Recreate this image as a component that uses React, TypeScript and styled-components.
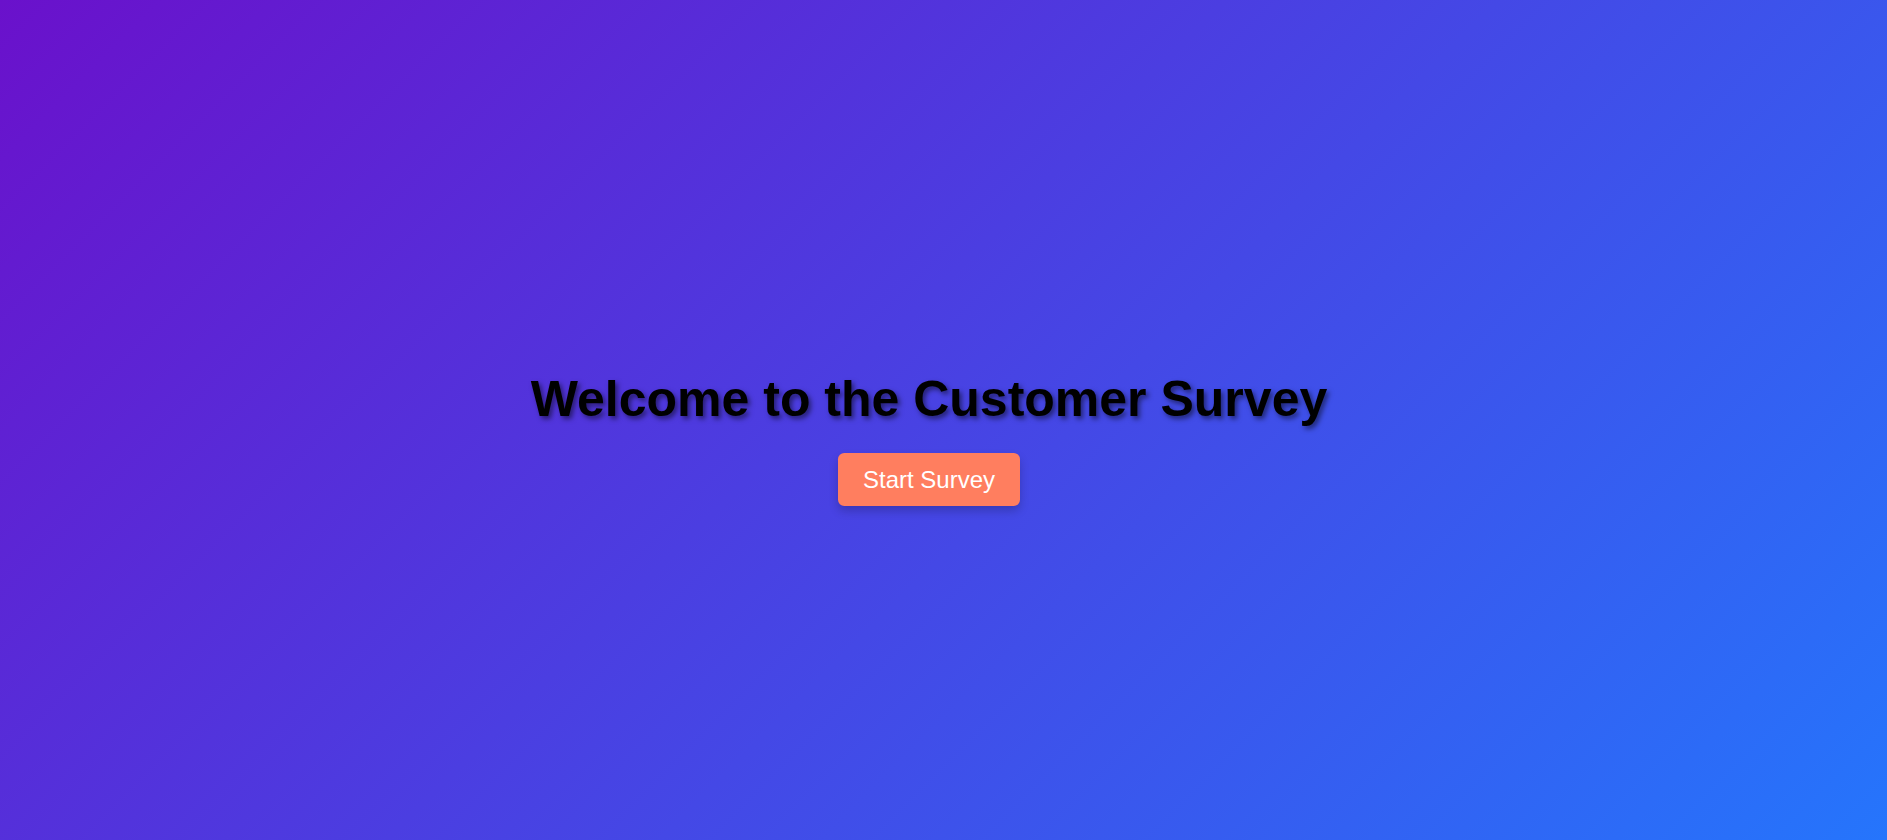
import React from 'react';
import styled, { createGlobalStyle } from 'styled-components';

const GlobalStyle = createGlobalStyle`
  body {
    margin: 0;
    font-family: Arial, 'Liberation Sans', sans-serif;
  }
`;

const Page = styled.main`
  box-sizing: border-box;
  height: 100vh;
  padding: 37px 29px 0 0;
  display: flex;
  flex-direction: column;
  align-items: center;
  justify-content: center;
  overflow: hidden;
  background: linear-gradient(135deg, #6a11cb 0%, #2575fc 100%);
`;

const Title = styled.h1`
  margin: 0 0 25px;
  font-size: 50px;
  line-height: 57px;
  font-weight: bold;
  color: #000;
  text-shadow: 2.5px 2.5px 5px rgba(0, 0, 0, 0.5);
`;

const StartButton = styled.button`
  margin: 0;
  padding: 13px 25px 12px;
  border: none;
  border-radius: 6.25px;
  background: #ff7e5f;
  color: #fff;
  font-family: inherit;
  font-size: 24px;
  line-height: 28px;
  cursor: pointer;
  box-shadow: 0 5px 10px rgba(0, 0, 0, 0.2);
`;

export default function App() {
  return (
    <>
      <GlobalStyle />
      <Page>
        <Title>Welcome to the Customer Survey</Title>
        <StartButton type="button">Start Survey</StartButton>
      </Page>
    </>
  );
}
